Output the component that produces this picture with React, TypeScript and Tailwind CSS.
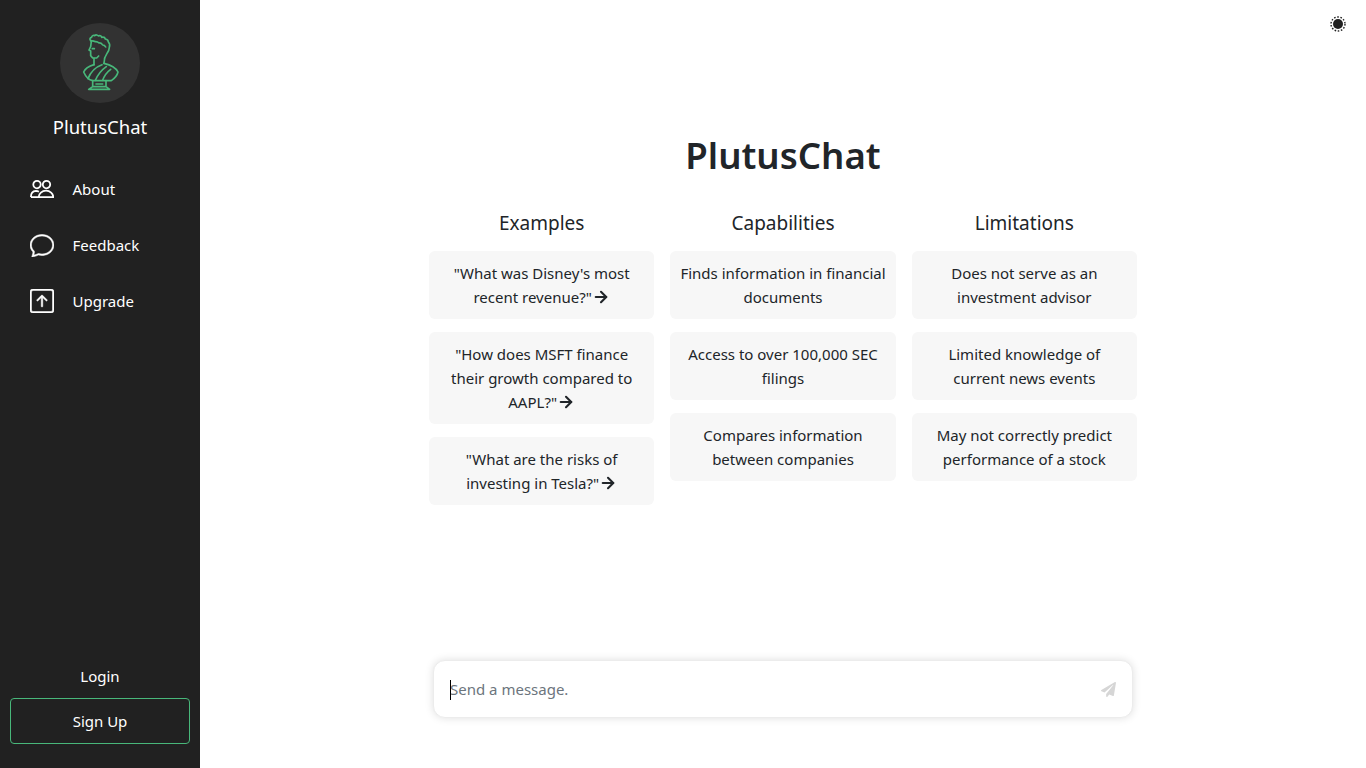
import { ArrowRight } from "lucide-react";
import { BsArrowUpSquare, BsChat } from "react-icons/bs";
import { FaPaperPlane } from "react-icons/fa";

const font = { fontFamily: '"Noto Sans", sans-serif' };

const columns = [
  {
    title: "Examples",
    arrow: true,
    items: [`"What was Disney's most recent revenue?"`, `"How does MSFT finance their growth compared to AAPL?"`, `"What are the risks of investing in Tesla?"`],
  },
  {
    title: "Capabilities",
    arrow: false,
    items: ["Finds information in financial documents", "Access to over 100,000 SEC filings", "Compares information between companies"],
  },
  {
    title: "Limitations",
    arrow: false,
    items: ["Does not serve as an investment advisor", "Limited knowledge of current news events", "May not correctly predict performance of a stock"],
  },
];

function Bust() {
  return (
    <svg viewBox="-54 -21 240 240" className="w-20 h-20" fill="none" stroke="#48b77a" strokeWidth="5" strokeLinejoin="round" strokeLinecap="round">
      {/* laurel and back of the head */}
      <path d="M38 32c-4-4-2-10 3-10 0-5 5-7 9-5 3-3 9-3 11 1 4-2 9-1 10 4 5-1 10 1 11 5 5 1 9 4 9 9 4 4 5 10 3 16 0 8-3 14-8 20l-6 12" />
      <path d="M38 32c5 1 9 0 13 3 5-1 9 1 12 4 5-1 9 2 11 6 4 0 7 2 9 6" />
      {/* face */}
      <path d="M40 34l-2 16-5 10 5 3v14l6 7h12l6-6" />
      <path d="M43 56h6" />
      {/* neck */}
      <path d="M48 85v19M80 84l-2 16" />
      {/* torso */}
      <path d="M48 104c-17 5-27 13-31 22 6 14 15 24 27 26h56c10-7 18-17 20-26-7-14-25-22-42-26" />
      <path d="M30 146c8-21 25-36 42-42M52 151c8-18 20-32 33-41M74 151c4-12 12-24 24-33" />
      {/* pedestal */}
      <path d="M44 152v18h40v-18M44 170l-12 8h63l-11-8M54 162h20" />
    </svg>
  );
}

function PeopleIcon() {
  return (
    <svg viewBox="0 0 24 18" className="w-6 h-[18px]" fill="none" stroke="#fff" strokeWidth="1.8">
      <circle cx="7" cy="4.6" r="3.7" />
      <circle cx="16.5" cy="4.6" r="3.7" />
      <path d="M.9 17.1c0-3.5 1.8-6 5-6.2 1.2 0 2.2.3 3 .8M8.6 17.1c.3-3.6 3.3-6.4 7.4-6.4s7.2 2.8 7.2 6.4H.9" />
    </svg>
  );
}

function ThemeIcon() {
  return (
    <svg viewBox="0 0 16 16" className="w-4 h-4">
      <circle cx="8" cy="8" r="7" fill="none" stroke="#212121" strokeWidth="1.4" strokeDasharray="1.6 1.6" />
      <circle cx="8" cy="8" r="5" fill="#212121" />
    </svg>
  );
}

function NavItem({ icon, label }: { icon: React.ReactNode; label: string }) {
  return (
    <div className="flex items-center h-14 pl-[30px] text-white text-[15px]">
      <span className="w-6 flex justify-center">{icon}</span>
      <span className="ml-[18.5px]">{label}</span>
    </div>
  );
}

export default function App() {
  return (
    <div className="flex h-screen bg-white overflow-hidden text-[#212529]" style={font}>
      <aside className="w-[200px] shrink-0 bg-[#212121] flex flex-col items-stretch">
        <div className="flex flex-col items-center pt-[23px]">
          <div className="w-20 h-20 rounded-full bg-[#323232]">
            <Bust />
          </div>
          <div className="mt-[9px] text-white text-[18.5px] leading-[30px]">PlutusChat</div>
        </div>
        <nav className="mt-[19px]">
          <NavItem icon={<PeopleIcon />} label="About" />
          <NavItem icon={<BsChat size={24} stroke="currentColor" strokeWidth={0.35} />} label="Feedback" />
          <NavItem icon={<BsArrowUpSquare size={24} stroke="currentColor" strokeWidth={0.35} />} label="Upgrade" />
        </nav>
        <div className="mt-auto px-2.5 pb-6">
          <div className="text-center text-white text-[15px] leading-[22px] mb-[11px]">Login</div>
          <div className="h-[46px] rounded border border-[#48b77a] flex items-center justify-center text-white text-[15px]">Sign Up</div>
        </div>
      </aside>
      <main className="flex-1 relative flex flex-col items-center">
        <div className="absolute top-4 right-5">
          <ThemeIcon />
        </div>
        <h1 className="mt-[129px] text-[36.6px] leading-[52px] font-semibold">PlutusChat</h1>
        <div className="mt-[28px] grid grid-cols-3 gap-4 w-[708px]">
          {columns.map((col) => (
            <div key={col.title} className="flex flex-col">
              <h2 className="text-center text-[19px] leading-[28px] mb-[14px]">{col.title}</h2>
              <div className="flex flex-col gap-[13px]">
                {col.items.map((item) => (
                  <div key={item} className="rounded-md bg-[#f7f7f7] px-2.5 py-[10px] text-center text-[15px] leading-6">
                    {item}
                    {col.arrow && <ArrowRight size={18} strokeWidth={2.8} className="inline align-[-3px]" />}
                  </div>
                ))}
              </div>
            </div>
          ))}
        </div>
        <div className="mt-auto mb-[50px] relative w-[700px] h-[58px] rounded-xl border border-[#ececec] shadow-[0_0_8px_rgba(0,0,0,0.13)] bg-white flex items-center pl-4 pr-4">
          <span className="absolute left-4 top-[19px] w-px h-5 bg-black" />
          <input className="flex-1 outline-none text-[15px] placeholder:text-[#6c757d]" placeholder="Send a message." />
          <FaPaperPlane size={15} className="text-[#d6d6d6]" />
        </div>
      </main>
    </div>
  );
}
